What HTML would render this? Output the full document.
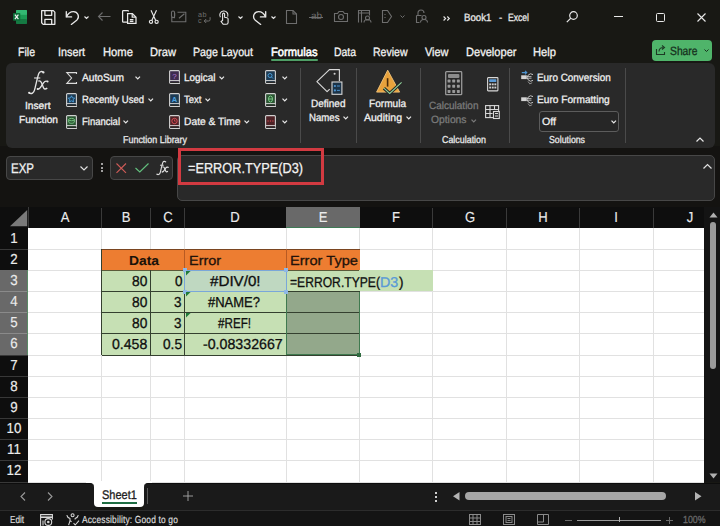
<!DOCTYPE html>
<html><head><meta charset="utf-8">
<style>
*{margin:0;padding:0;box-sizing:border-box}
html,body{width:720px;height:526px;overflow:hidden;background:#181814;font-family:"Liberation Sans",sans-serif;color:#fff;position:relative}
.a{position:absolute}
.t{position:absolute;white-space:nowrap;line-height:1;transform-origin:0 0;text-rendering:geometricPrecision}
svg{position:absolute;overflow:visible}
</style></head><body>

<div class="a" style="left:0;top:0;width:720px;height:63px;background:#181814"></div>
<div class="a" style="left:0;top:146px;width:720px;height:61px;background:#141311"></div>
<div class="a" style="left:6px;top:63px;width:709px;height:85px;background:#292929;border-radius:6px"></div>
<svg style="left:13px;top:10px" width="14" height="14" viewBox="0 0 14 14">
<rect x="3" y="0" width="11" height="13.7" rx="1" fill="#1c9a55"/>
<rect x="3" y="0" width="11" height="4.6" rx="1" fill="#33b873"/>
<rect x="3" y="3.5" width="11" height="1.1" fill="#33b873"/>
<rect x="3" y="9.1" width="11" height="4.6" rx="1" fill="#157a43"/>
<rect x="0" y="3" width="7.3" height="7.7" rx="0.8" fill="#0e6e3a"/>
<path d="M1.9 4.7l3.5 4.4M5.4 4.7L1.9 9.1" stroke="#f4f4f4" stroke-width="1.2"/>
</svg>
<svg style="left:40.5px;top:9.5px" width="14.5" height="15" viewBox="0 0 14.5 15" fill="none" stroke="#e8e8e8" stroke-width="1.3" stroke-linejoin="round">
<path d="M.65 .65h11.7l1.5 1.5v12.2H2.2L.65 12.8z"/><path d="M3.9 .8v4.5h6.8V.8"/><path d="M3.9 14.2V9.4h6.8v4.8"/>
</svg>
<svg style="left:65px;top:9.5px" width="15" height="15" viewBox="0 0 15 15" fill="none" stroke="#e8e8e8" stroke-width="1.3" stroke-linecap="round">
<path d="M1.3 1.6v5.3h5.3"/><path d="M1.6 6.7C3 3.3 5.6 1.6 8.4 1.6a4.9 4.9 0 0 1 3.6 8.3L6.3 14.4"/>
</svg>
<svg style="left:83.5px;top:15.8px" width="5" height="3" viewBox="0 0 5 3" fill="none" stroke="#e8e8e8" stroke-width="1.1"><path d="M0.5 0.5l2 2 2-2"/></svg>
<svg style="left:98px;top:12px" width="13" height="9" viewBox="0 0 13 9" fill="none" stroke="#6e6e6e" stroke-width="1.1"><path d="M0.5 4.5h12M4.5 0.5l-4 4 4 4"/></svg>
<svg style="left:122px;top:10px" width="15" height="14" viewBox="0 0 15 14" fill="none" stroke="#e8e8e8" stroke-width="1.25">
<path d="M6.5 1.6V1.4A.8.8 0 0 0 5.7.6H1.4a.8.8 0 0 0-.8.8v10a.8.8 0 0 0 .8.8H5"/><path d="M5.6 3.6h4.8l3.6 3.6v6.2H5.6z"/><path d="M10.2 3.8v3.4h3.6"/><path d="M7.8 9.7h3.6M7.8 11.4h3.6"/>
</svg>
<svg style="left:148px;top:10px" width="11" height="14" viewBox="0 0 11 14" fill="none" stroke="#e8e8e8" stroke-width="1.15">
<path d="M3 0.3l4.6 10M8.5 0.3l-4.6 10"/><circle cx="3" cy="11.8" r="1.6"/><circle cx="8.6" cy="11.8" r="1.6"/>
</svg>
<svg style="left:170.5px;top:10px" width="16" height="12.5" viewBox="0 0 16 12.5" fill="none" stroke="#6e6e6e" stroke-width="1.1">
<path d="M.8 6.5v5.2h14V2.2H6.5"/><path d="M8 8.2l5.4-4.4"/><path d="M3.5 8.2V2.5a1.5 1.5 0 0 0-3 0v3.5a1.6 1.6 0 0 0 3.2 0V3"/>
</svg>
<svg style="left:197.5px;top:10px" width="13" height="14" viewBox="0 0 13 14">
<text x="0" y="6.6" font-size="7.2" font-family="Liberation Sans" fill="#6e6e6e" letter-spacing="0.6">ab</text>
<text x="0" y="12.6" font-size="7.2" font-family="Liberation Sans" fill="#6e6e6e">c</text>
<path d="M12.1 7.2v2.4a1.4 1.4 0 0 1-1.4 1.4H6.2M8.2 9l-2 2 2 2" fill="none" stroke="#6e6e6e" stroke-width="1"/>
</svg>
<svg style="left:219px;top:9.5px" width="11" height="15" viewBox="0 0 11 15" fill="none" stroke="#e8e8e8" stroke-width="1.1" stroke-linejoin="round">
<path d="M1.4 7.3A4.1 4.1 0 1 1 8.7 6.6"/><path d="M3.6 10.6V4.1a1 1 0 0 1 2 0V7.2l2.4.5a1.4 1.4 0 0 1 1.1 1.4v3.4a1.8 1.8 0 0 1-1.8 1.8H4.3L2 11.5z"/>
</svg>
<svg style="left:237.5px;top:15.8px" width="5" height="3" viewBox="0 0 5 3" fill="none" stroke="#e8e8e8" stroke-width="1.1"><path d="M0.5 0.5l2 2 2-2"/></svg>
<svg style="left:252px;top:9.5px" width="15" height="15" viewBox="0 0 15 15" fill="none" stroke="#e8e8e8" stroke-width="1.3" stroke-linecap="round">
<path d="M13.7 1.6v5.3H8.4"/><path d="M13.4 6.7C12 3.3 9.4 1.6 6.6 1.6a4.9 4.9 0 0 0-3.6 8.3L8.7 14.4"/>
</svg>
<svg style="left:271px;top:15.8px" width="5" height="3" viewBox="0 0 5 3" fill="none" stroke="#e8e8e8" stroke-width="1.1"><path d="M0.5 0.5l2 2 2-2"/></svg>
<svg style="left:286px;top:10px" width="11" height="14" viewBox="0 0 11 14" fill="none" stroke="#6e6e6e" stroke-width="1.1"><path d="M0.5 0.5h6.5l3.5 3.5v9.5H0.5z"/><path d="M7 0.5v3.5h3.5"/></svg>
<div class="t" style="left:311px;top:12px;font-size:10px;color:#6e6e6e">ab</div>
<div class="a" style="left:309px;top:17px;width:14px;height:1px;background:#6e6e6e"></div>
<svg style="left:334px;top:11px" width="14" height="11" viewBox="0 0 14 11" fill="none" stroke="#6e6e6e" stroke-width="1.1"><path d="M0.5 2.5h3l1.5-2h4l1.5 2h3v8h-13z"/><circle cx="7" cy="6" r="2.5"/></svg>
<svg style="left:358px;top:10px" width="14" height="13" viewBox="0 0 14 13" fill="none" stroke="#6e6e6e" stroke-width="1.1"><path d="M0.5 12.5V.5h11v5"/><path d="M.5 3h11M3.5 .5v12"/><circle cx="9.5" cy="8" r="2"/><path d="M6 12.5a3.5 3 0 0 1 7 0"/></svg>
<svg style="left:382px;top:10px" width="10" height="13" viewBox="0 0 10 13" fill="none" stroke="#6e6e6e" stroke-width="1.1"><path d="M.5 .5h5l4 6-4 6h-5z"/><path d="M3 4v1M3 7v1"/></svg>
<svg style="left:400px;top:15px" width="5" height="3" viewBox="0 0 5 3" fill="none" stroke="#6e6e6e" stroke-width="1"><path d="M0.5 0.5l2 2 2-2"/></svg>
<svg style="left:416px;top:10px" width="12" height="13" viewBox="0 0 12 13" fill="none" stroke="#6e6e6e" stroke-width="1.1"><path d="M2 5V3a3 3 0 0 1 6 0"/><path d="M.5 5.5h5M.5 5.5v7h3"/><circle cx="8" cy="7.5" r="2"/><path d="M4.5 12.5a3.5 3 0 0 1 7 0"/></svg>
<svg style="left:442.5px;top:15.5px" width="7" height="5" viewBox="0 0 7 5" fill="none" stroke="#e8e8e8" stroke-width="1.1"><path d="M.6 .5l2 2-2 2M4.3 .5l2 2-2 2"/></svg>
<svg style="left:566px;top:11px" width="12" height="12" viewBox="0 0 12 12" fill="none" stroke="#e8e8e8" stroke-width="1.2"><circle cx="7.5" cy="4.5" r="3.8"/><path d="M4.8 7.2L.8 11.2"/></svg>
<div class="a" style="left:614px;top:16px;width:9px;height:1px;background:#e8e8e8"></div>
<div class="a" style="left:656px;top:13px;width:9px;height:9px;border:1.2px solid #e8e8e8;border-radius:1.5px"></div>
<svg style="left:697px;top:13px" width="9" height="9" viewBox="0 0 9 9" fill="none" stroke="#e8e8e8" stroke-width="1.1"><path d="M.5 .5l8 8M8.5 .5l-8 8"/></svg>
<div class="a" style="left:271px;top:58.5px;width:47px;height:2px;background:#4e9e66;border-radius:1px"></div>
<div class="a" style="left:652px;top:40px;width:60px;height:21px;background:#4fb46a;border-radius:4px"></div>
<svg style="left:656px;top:45px" width="10" height="10" viewBox="0 0 10 10" fill="none" stroke="#1d3a24" stroke-width="1.1"><path d="M.5 4v5.5h8V7"/><path d="M3 6.5C3 3.5 5 2.5 7.5 2.5M6 .5l2.5 2-2.5 2"/></svg>
<svg style="left:704px;top:49px" width="5" height="3" viewBox="0 0 5 3" fill="none" stroke="#16301d" stroke-width="1"><path d="M0.5 0.5l2 2 2-2"/></svg>
<svg style="left:27.5px;top:71.3px" width="20.7" height="23.2" viewBox="7.5 6.3 20.7 23.2"><path d="M22.7 7.6C21.5 6.3 19.2 6.6 18.2 9C17.2 11.5 15 22 14 25.5C13.2 28.2 11.2 29.5 8.6 28.4" stroke="#e4e4e4" stroke-width="1.35" fill="none"/><circle cx="22.9" cy="7.7" r="1.15" fill="#e4e4e4"/><circle cx="8.7" cy="28.1" r="1.15" fill="#e4e4e4"/><path d="M13.6 13.3H19.8" stroke="#e4e4e4" stroke-width="1.1"/><path d="M17.8 16.4C19.6 15.7 20.5 16.6 21.2 18.6L23 23C23.6 24.5 24.8 24.8 26.8 23.4" stroke="#e4e4e4" stroke-width="1.35" fill="none"/><path d="M27 16.8C25.5 15.9 24.3 16.4 23 18.1L20 22.6C19 24.1 18 24.6 17 24.1" stroke="#e4e4e4" stroke-width="1.35" fill="none"/><circle cx="27.1" cy="16.9" r="1" fill="#e4e4e4"/><circle cx="17.2" cy="24.2" r="1" fill="#e4e4e4"/></svg>
<svg style="left:66px;top:72px" width="11" height="12" viewBox="0 0 11 12" fill="none" stroke="#dcdcdc" stroke-width="1.1"><path d="M10.5 2V.6H.8l4.8 5.4L.8 11.4h9.7V10"/></svg>
<svg style="left:135.25px;top:75.75px" width="5.5" height="3.5" viewBox="0 0 5.5 3.5" fill="none" stroke="#e8e8e8" stroke-width="1.25"><path d="M0.5 0.6l2.25 2.25 2.25-2.25"/></svg>
<svg style="left:66px;top:92.5px" width="11" height="14" viewBox="0 0 11 14">
<path d="M1.5.6h8a.9.9 0 0 1 .9.9v11.9H1.5a.9.9 0 0 1-.9-.9V1.5a.9.9 0 0 1 .9-.9z" fill="#1d3a52" stroke="#d0d0d0" stroke-width="1.1"/>
<path d="M.6 10.6h9.8" stroke="#d0d0d0" stroke-width="1"/>
<path d="M1.2 11.6h9.2v1.4H1.2z" fill="#2a2a2a"/>
<path d="M5.5 2.8l1 2.1 2.2.3-1.6 1.5.4 2.2-2-1.1-2 1.1.4-2.2-1.6-1.5 2.2-.3z" fill="none" stroke="#4da3e0" stroke-width="0.9"/>
</svg>
<svg style="left:148.25px;top:98.25px" width="5.5" height="3.5" viewBox="0 0 5.5 3.5" fill="none" stroke="#e8e8e8" stroke-width="1.25"><path d="M0.5 0.6l2.25 2.25 2.25-2.25"/></svg>
<svg style="left:66px;top:114.5px" width="11" height="14" viewBox="0 0 11 14">
<path d="M1.5.6h8a.9.9 0 0 1 .9.9v11.9H1.5a.9.9 0 0 1-.9-.9V1.5a.9.9 0 0 1 .9-.9z" fill="#2b5533" stroke="#d0d0d0" stroke-width="1.1"/>
<path d="M.6 10.6h9.8" stroke="#d0d0d0" stroke-width="1"/>
<path d="M1.2 11.6h9.2v1.4H1.2z" fill="#2a2a2a"/>
<ellipse cx="5.5" cy="4.6" rx="2.8" ry="1.2" fill="none" stroke="#7fd08a" stroke-width="0.9"/><path d="M2.7 4.6v2.4c0 .7 1.3 1.3 2.8 1.3s2.8-.6 2.8-1.3V4.6" fill="none" stroke="#7fd08a" stroke-width="0.9"/>
</svg>
<svg style="left:123.25px;top:120.25px" width="5.5" height="3.5" viewBox="0 0 5.5 3.5" fill="none" stroke="#e8e8e8" stroke-width="1.25"><path d="M0.5 0.6l2.25 2.25 2.25-2.25"/></svg>
<svg style="left:168.5px;top:70px" width="11" height="14" viewBox="0 0 11 14">
<path d="M1.5.6h8a.9.9 0 0 1 .9.9v11.9H1.5a.9.9 0 0 1-.9-.9V1.5a.9.9 0 0 1 .9-.9z" fill="#3e2c4e" stroke="#d0d0d0" stroke-width="1.1"/>
<path d="M.6 10.6h9.8" stroke="#d0d0d0" stroke-width="1"/>
<path d="M1.2 11.6h9.2v1.4H1.2z" fill="#2a2a2a"/>
<text x="5.5" y="8.6" font-size="8" font-family="Liberation Sans" fill="#b57ad6" text-anchor="middle">?</text>
</svg>
<svg style="left:219.25px;top:75.75px" width="5.5" height="3.5" viewBox="0 0 5.5 3.5" fill="none" stroke="#e8e8e8" stroke-width="1.25"><path d="M0.5 0.6l2.25 2.25 2.25-2.25"/></svg>
<svg style="left:168.5px;top:92.5px" width="11" height="14" viewBox="0 0 11 14">
<path d="M1.5.6h8a.9.9 0 0 1 .9.9v11.9H1.5a.9.9 0 0 1-.9-.9V1.5a.9.9 0 0 1 .9-.9z" fill="#1d3a52" stroke="#d0d0d0" stroke-width="1.1"/>
<path d="M.6 10.6h9.8" stroke="#d0d0d0" stroke-width="1"/>
<path d="M1.2 11.6h9.2v1.4H1.2z" fill="#2a2a2a"/>
<text x="5.5" y="8.8" font-size="7.5" font-weight="bold" font-family="Liberation Sans" fill="#4da3e0" text-anchor="middle">A</text>
</svg>
<svg style="left:204.75px;top:98.25px" width="5.5" height="3.5" viewBox="0 0 5.5 3.5" fill="none" stroke="#e8e8e8" stroke-width="1.25"><path d="M0.5 0.6l2.25 2.25 2.25-2.25"/></svg>
<svg style="left:168.5px;top:114.5px" width="11" height="14" viewBox="0 0 11 14">
<path d="M1.5.6h8a.9.9 0 0 1 .9.9v11.9H1.5a.9.9 0 0 1-.9-.9V1.5a.9.9 0 0 1 .9-.9z" fill="#4e2226" stroke="#d0d0d0" stroke-width="1.1"/>
<path d="M.6 10.6h9.8" stroke="#d0d0d0" stroke-width="1"/>
<path d="M1.2 11.6h9.2v1.4H1.2z" fill="#2a2a2a"/>
<circle cx="5.5" cy="6" r="2.7" fill="none" stroke="#e0525a" stroke-width="0.9"/><path d="M5.5 4.5v1.6h1.2" fill="none" stroke="#e0525a" stroke-width="0.8"/>
</svg>
<svg style="left:244.25px;top:120.25px" width="5.5" height="3.5" viewBox="0 0 5.5 3.5" fill="none" stroke="#e8e8e8" stroke-width="1.25"><path d="M0.5 0.6l2.25 2.25 2.25-2.25"/></svg>
<svg style="left:265px;top:70px" width="11" height="14" viewBox="0 0 11 14">
<path d="M1.5.6h8a.9.9 0 0 1 .9.9v11.9H1.5a.9.9 0 0 1-.9-.9V1.5a.9.9 0 0 1 .9-.9z" fill="#1d3a52" stroke="#d0d0d0" stroke-width="1.1"/>
<path d="M.6 10.6h9.8" stroke="#d0d0d0" stroke-width="1"/>
<path d="M1.2 11.6h9.2v1.4H1.2z" fill="#2a2a2a"/>
<circle cx="5" cy="5.5" r="2" fill="none" stroke="#4da3e0" stroke-width="0.9"/><path d="M6.5 7l1.5 1.5" stroke="#4da3e0" stroke-width="0.9"/>
</svg>
<svg style="left:281.75px;top:75.75px" width="5.5" height="3.5" viewBox="0 0 5.5 3.5" fill="none" stroke="#e8e8e8" stroke-width="1.25"><path d="M0.5 0.6l2.25 2.25 2.25-2.25"/></svg>
<svg style="left:265px;top:92.5px" width="11" height="14" viewBox="0 0 11 14">
<path d="M1.5.6h8a.9.9 0 0 1 .9.9v11.9H1.5a.9.9 0 0 1-.9-.9V1.5a.9.9 0 0 1 .9-.9z" fill="#2b5533" stroke="#d0d0d0" stroke-width="1.1"/>
<path d="M.6 10.6h9.8" stroke="#d0d0d0" stroke-width="1"/>
<path d="M1.2 11.6h9.2v1.4H1.2z" fill="#2a2a2a"/>
<ellipse cx="5.5" cy="6" rx="2" ry="3" fill="none" stroke="#7fd08a" stroke-width="0.9"/><path d="M3.5 6h4" stroke="#7fd08a" stroke-width="0.9"/>
</svg>
<svg style="left:281.75px;top:98.25px" width="5.5" height="3.5" viewBox="0 0 5.5 3.5" fill="none" stroke="#e8e8e8" stroke-width="1.25"><path d="M0.5 0.6l2.25 2.25 2.25-2.25"/></svg>
<svg style="left:265px;top:114.5px" width="11" height="14" viewBox="0 0 11 14">
<path d="M1.5.6h8a.9.9 0 0 1 .9.9v11.9H1.5a.9.9 0 0 1-.9-.9V1.5a.9.9 0 0 1 .9-.9z" fill="#4e2226" stroke="#d0d0d0" stroke-width="1.1"/>
<path d="M.6 10.6h9.8" stroke="#d0d0d0" stroke-width="1"/>
<path d="M1.2 11.6h9.2v1.4H1.2z" fill="#2a2a2a"/>
<path d="M2.5 6h1.2M4.9 6h1.2M7.3 6h1.2" stroke="#e0525a" stroke-width="1"/>
</svg>
<svg style="left:281.75px;top:120.25px" width="5.5" height="3.5" viewBox="0 0 5.5 3.5" fill="none" stroke="#e8e8e8" stroke-width="1.25"><path d="M0.5 0.6l2.25 2.25 2.25-2.25"/></svg>
<div class="a" style="left:300px;top:68px;width:1px;height:75px;background:#4a4a4a"></div>
<svg style="left:316px;top:69px" width="27" height="26" viewBox="0 0 27 26" fill="none">
<path d="M23.4 12V.6H13.4L.9 12.7l10.2 10 2.6-2.6" stroke="#d8d8d8" stroke-width="1.15" stroke-linejoin="round"/>
<circle cx="18.6" cy="4.8" r="1.05" fill="#cfcfcf"/>
<rect x="16" y="13" width="9.9" height="12.3" fill="#1b3348" stroke="#d8d8d8" stroke-width="1.1"/>
<circle cx="18.9" cy="17" r="1.1" fill="#4d93cf"/><path d="M20.9 17h3" stroke="#4d93cf" stroke-width="1"/>
<circle cx="18.9" cy="21.4" r="1.1" fill="#4d93cf"/><path d="M20.9 21.4h3" stroke="#4d93cf" stroke-width="1"/>
</svg>
<svg style="left:342.75px;top:116.25px" width="5.5" height="3.5" viewBox="0 0 5.5 3.5" fill="none" stroke="#e8e8e8" stroke-width="1.25"><path d="M0.5 0.6l2.25 2.25 2.25-2.25"/></svg>
<div class="a" style="left:356px;top:68px;width:1px;height:75px;background:#4a4a4a"></div>
<svg style="left:376px;top:69px" width="27" height="26" viewBox="0 0 27 26">
<path d="M11.7 1.2L23.6 23.1H.6z" fill="#e8a23c" stroke="#f2c47a" stroke-width="0.9" stroke-linejoin="round"/>
<path d="M11.6 9.2V17.6" stroke="#4a2a08" stroke-width="1.6"/>
<path d="M7.9 19.2L13.7 24.4 25.6 13.4" fill="none" stroke="#262626" stroke-width="3.2"/>
<path d="M7.9 19.2L13.7 24.4 25.6 13.4" fill="none" stroke="#8fd09a" stroke-width="1.1"/>
</svg>
<svg style="left:405.75px;top:116.25px" width="5.5" height="3.5" viewBox="0 0 5.5 3.5" fill="none" stroke="#e8e8e8" stroke-width="1.25"><path d="M0.5 0.6l2.25 2.25 2.25-2.25"/></svg>
<div class="a" style="left:419.5px;top:68px;width:1px;height:75px;background:#4a4a4a"></div>
<svg style="left:444.5px;top:70.5px" width="17.5" height="24.5" viewBox="0 0 17.5 24.5" fill="none">
<rect x="0.7" y="0.7" width="16" height="23" rx="0.8" stroke="#9a9a9a" stroke-width="1.3"/>
<rect x="3" y="2.9" width="11.4" height="4.2" rx="1" fill="#8c8c8c"/>
<g fill="#9a9a9a"><rect x="2.6" y="8.6" width="2.9" height="2.9" rx=".6"/><rect x="7.25" y="8.6" width="2.9" height="2.9" rx=".6"/><rect x="11.9" y="8.6" width="2.9" height="2.9" rx=".6"/>
<rect x="2.6" y="13.8" width="2.9" height="2.9" rx=".6"/><rect x="7.25" y="13.8" width="2.9" height="2.9" rx=".6"/><rect x="11.9" y="13.8" width="2.9" height="2.9" rx=".6"/>
<rect x="2.6" y="19" width="2.9" height="2.9" rx=".6"/><rect x="7.25" y="19" width="2.9" height="2.9" rx=".6"/><rect x="11.9" y="19" width="2.9" height="2.9" rx=".6"/></g>
</svg>
<svg style="left:470.75px;top:118.75px" width="5.5" height="3.5" viewBox="0 0 5.5 3.5" fill="none" stroke="#7a7a7a" stroke-width="1.25"><path d="M0.5 0.6l2.25 2.25 2.25-2.25"/></svg>
<svg style="left:486.8px;top:76.6px" width="11.5" height="14.5" viewBox="0 0 11.5 14.5" fill="none">
<rect x="0.6" y="0.6" width="10.3" height="13.3" rx="0.6" stroke="#d8d8d8" stroke-width="1.1"/>
<rect x="2.2" y="2.2" width="7.1" height="2.8" rx=".5" fill="#5a9ad6"/>
<g fill="#d0d0d0"><rect x="2.2" y="6.4" width="1.9" height="1.9"/><rect x="4.8" y="6.4" width="1.9" height="1.9"/><rect x="7.4" y="6.4" width="1.9" height="1.9"/>
<rect x="2.2" y="9.6" width="1.9" height="1.9"/><rect x="4.8" y="9.6" width="1.9" height="1.9"/><rect x="7.4" y="9.6" width="1.9" height="1.9"/></g>
</svg>
<svg style="left:485px;top:105px" width="15" height="14" viewBox="0 0 15 14" fill="none" stroke="#d8d8d8" stroke-width="1.1">
<rect x="0.6" y="0.6" width="13" height="12" />
<path d="M0.6 4.5h13M0.6 8.5h7M5 0.6v12M9.5 .6v4"/>
<rect x="8.5" y="6.5" width="5.8" height="7" fill="#2a2a2a"/>
<path d="M10 8.5h3M10 11h3" />
</svg>
<div class="a" style="left:509px;top:68px;width:1px;height:75px;background:#4a4a4a"></div>
<svg style="left:520.5px;top:69.5px" width="13" height="15" viewBox="0 0 13 15" fill="none">
<rect x="0.2" y="5.3" width="5.6" height="3.8" fill="#d4d4d4"/>
<path d="M12 4.6A3.6 3.6 0 1 0 12 10.4" stroke="#c4c4c4" stroke-width="1"/>
<path d="M6 6.6h4.5M6 8.2h4.5" stroke="#c4c4c4" stroke-width="0.9"/>
<path d="M7 11.5l1.8 2.4 2.4-1.2" stroke="#9a9a9a" stroke-width="0.9"/>
<path d="M.8 2.6h5M4 .8l1.8 1.8L4 4.4" stroke="#4d93cf" stroke-width="1.1"/>
</svg>
<svg style="left:520.5px;top:92px" width="13" height="15" viewBox="0 0 13 15" fill="none">
<rect x="0.2" y="5.3" width="5.6" height="3.8" fill="#d4d4d4"/>
<path d="M12 4.6A3.6 3.6 0 1 0 12 10.4" stroke="#c4c4c4" stroke-width="1"/>
<path d="M6 6.6h4.5M6 8.2h4.5" stroke="#c4c4c4" stroke-width="0.9"/>
<path d="M7 11.5l1.8 2.4 2.4-1.2" stroke="#9a9a9a" stroke-width="0.9"/>

</svg>
<div class="a" style="left:539px;top:111px;width:80px;height:20.5px;border:1px solid #5c5c5c;border-radius:3px;background:#262626"></div>
<svg style="left:611.25px;top:119.75px" width="5.5" height="3.5" viewBox="0 0 5.5 3.5" fill="none" stroke="#e8e8e8" stroke-width="1.25"><path d="M0.5 0.6l2.25 2.25 2.25-2.25"/></svg>
<div class="a" style="left:625px;top:68px;width:1px;height:75px;background:#4a4a4a"></div>
<svg style="left:696px;top:137px" width="8" height="5" viewBox="0 0 8 5" fill="none" stroke="#e8e8e8" stroke-width="1.2"><path d="M.5 4.5l3.5-3.5 3.5 3.5"/></svg>
<div class="a" style="left:6px;top:155.5px;width:87px;height:24px;background:#292929;border:1px solid #474747;border-radius:4px"></div>
<svg style="left:80px;top:166px" width="8" height="5" viewBox="0 0 8 5" fill="none" stroke="#e0e0e0" stroke-width="1.2"><path d="M.5 .5l3.5 3.5 3.5-3.5"/></svg>
<div class="a" style="left:100.5px;top:163px;width:2px;height:2px;background:#cfcfcf;border-radius:1px"></div>
<div class="a" style="left:100.5px;top:166.5px;width:2px;height:2px;background:#cfcfcf;border-radius:1px"></div>
<div class="a" style="left:100.5px;top:170px;width:2px;height:2px;background:#cfcfcf;border-radius:1px"></div>
<div class="a" style="left:110px;top:155.5px;width:63px;height:24px;background:#292929;border:1px solid #474747;border-radius:4px"></div>
<svg style="left:116px;top:162.7px" width="10.5" height="10.3" viewBox="0 0 10.5 10.3" fill="none" stroke="#cf5b57" stroke-width="1.1"><path d="M.5 .5l9.5 9.3M10 .5l-9.5 9.3"/></svg>
<svg style="left:134.8px;top:162.7px" width="14" height="9.5" viewBox="0 0 14 9.5" fill="none" stroke="#63c07e" stroke-width="1.15"><path d="M.5 5l4.3 4L13.5.5"/></svg>
<svg style="left:156px;top:160.9px" width="13.1" height="14" viewBox="7.5 6.3 20.7 23.2"><path d="M22.7 7.6C21.5 6.3 19.2 6.6 18.2 9C17.2 11.5 15 22 14 25.5C13.2 28.2 11.2 29.5 8.6 28.4" stroke="#dedede" stroke-width="1.9" fill="none"/><circle cx="22.9" cy="7.7" r="1.15" fill="#dedede"/><circle cx="8.7" cy="28.1" r="1.15" fill="#dedede"/><path d="M13.6 13.3H19.8" stroke="#dedede" stroke-width="1.5"/><path d="M17.8 16.4C19.6 15.7 20.5 16.6 21.2 18.6L23 23C23.6 24.5 24.8 24.8 26.8 23.4" stroke="#dedede" stroke-width="1.9" fill="none"/><path d="M27 16.8C25.5 15.9 24.3 16.4 23 18.1L20 22.6C19 24.1 18 24.6 17 24.1" stroke="#dedede" stroke-width="1.9" fill="none"/><circle cx="27.1" cy="16.9" r="1" fill="#dedede"/><circle cx="17.2" cy="24.2" r="1" fill="#dedede"/></svg>
<div class="a" style="left:177px;top:155px;width:538px;height:46px;background:#292929;border:1px solid #474747;border-radius:5px"></div>
<div class="a" style="left:178px;top:148px;width:146px;height:37px;border:3px solid #d23a41"></div>
<svg style="left:703px;top:164px" width="9" height="5" viewBox="0 0 9 5" fill="none" stroke="#e0e0e0" stroke-width="1.2"><path d="M.5 4.5l4-4 4 4"/></svg>
<div class="a" style="left:0;top:207px;width:720px;height:275px;background:#0e0e0e"></div>
<div class="a" style="left:28px;top:228px;width:676px;height:254px;background:#ffffff"></div>
<div class="a" style="left:28px;top:248.67px;width:676px;height:1px;background:#e1e1e1"></div>
<div class="a" style="left:28px;top:269.83px;width:676px;height:1px;background:#e1e1e1"></div>
<div class="a" style="left:28px;top:291.00px;width:676px;height:1px;background:#e1e1e1"></div>
<div class="a" style="left:28px;top:312.17px;width:676px;height:1px;background:#e1e1e1"></div>
<div class="a" style="left:28px;top:333.33px;width:676px;height:1px;background:#e1e1e1"></div>
<div class="a" style="left:28px;top:354.50px;width:676px;height:1px;background:#e1e1e1"></div>
<div class="a" style="left:28px;top:375.67px;width:676px;height:1px;background:#e1e1e1"></div>
<div class="a" style="left:28px;top:396.83px;width:676px;height:1px;background:#e1e1e1"></div>
<div class="a" style="left:28px;top:418.00px;width:676px;height:1px;background:#e1e1e1"></div>
<div class="a" style="left:28px;top:439.17px;width:676px;height:1px;background:#e1e1e1"></div>
<div class="a" style="left:28px;top:460.33px;width:676px;height:1px;background:#e1e1e1"></div>
<div class="a" style="left:28px;top:481.50px;width:676px;height:1px;background:#e1e1e1"></div>
<div class="a" style="left:101.00px;top:228px;width:1px;height:254px;background:#e1e1e1"></div>
<div class="a" style="left:150.20px;top:228px;width:1px;height:254px;background:#e1e1e1"></div>
<div class="a" style="left:184.20px;top:228px;width:1px;height:254px;background:#e1e1e1"></div>
<div class="a" style="left:285.60px;top:228px;width:1px;height:254px;background:#e1e1e1"></div>
<div class="a" style="left:359.00px;top:228px;width:1px;height:254px;background:#e1e1e1"></div>
<div class="a" style="left:432.40px;top:228px;width:1px;height:254px;background:#e1e1e1"></div>
<div class="a" style="left:505.80px;top:228px;width:1px;height:254px;background:#e1e1e1"></div>
<div class="a" style="left:579.20px;top:228px;width:1px;height:254px;background:#e1e1e1"></div>
<div class="a" style="left:652.60px;top:228px;width:1px;height:254px;background:#e1e1e1"></div>
<div class="a" style="left:101.00px;top:208px;width:1px;height:20px;background:#3a3a3a"></div>
<div class="a" style="left:150.20px;top:208px;width:1px;height:20px;background:#3a3a3a"></div>
<div class="a" style="left:184.20px;top:208px;width:1px;height:20px;background:#3a3a3a"></div>
<div class="a" style="left:285.60px;top:208px;width:1px;height:20px;background:#3a3a3a"></div>
<div class="a" style="left:359.00px;top:208px;width:1px;height:20px;background:#3a3a3a"></div>
<div class="a" style="left:432.40px;top:208px;width:1px;height:20px;background:#3a3a3a"></div>
<div class="a" style="left:505.80px;top:208px;width:1px;height:20px;background:#3a3a3a"></div>
<div class="a" style="left:579.20px;top:208px;width:1px;height:20px;background:#3a3a3a"></div>
<div class="a" style="left:652.60px;top:208px;width:1px;height:20px;background:#3a3a3a"></div>
<div class="a" style="left:286.1px;top:207px;width:73.9px;height:21px;background:#696969"></div>
<div class="a" style="left:286.1px;top:226.5px;width:73.9px;height:1.2px;background:#3f7a55"></div>
<div class="t" style="left:64.75px;top:210.6px;width:40px;margin-left:-20px;text-align:center;font-size:14.5px;color:#ececec;transform:scaleX(0.9);transform-origin:50% 0;-webkit-text-stroke:0.15px #ececec">A</div>
<div class="t" style="left:126.10px;top:210.6px;width:40px;margin-left:-20px;text-align:center;font-size:14.5px;color:#ececec;transform:scaleX(0.9);transform-origin:50% 0;-webkit-text-stroke:0.15px #ececec">B</div>
<div class="t" style="left:167.70px;top:210.6px;width:40px;margin-left:-20px;text-align:center;font-size:14.5px;color:#ececec;transform:scaleX(0.9);transform-origin:50% 0;-webkit-text-stroke:0.15px #ececec">C</div>
<div class="t" style="left:235.40px;top:210.6px;width:40px;margin-left:-20px;text-align:center;font-size:14.5px;color:#ececec;transform:scaleX(0.9);transform-origin:50% 0;-webkit-text-stroke:0.15px #ececec">D</div>
<div class="t" style="left:322.80px;top:210.6px;width:40px;margin-left:-20px;text-align:center;font-size:14.5px;color:#ececec;transform:scaleX(0.9);transform-origin:50% 0;-webkit-text-stroke:0.15px #ececec">E</div>
<div class="t" style="left:396.20px;top:210.6px;width:40px;margin-left:-20px;text-align:center;font-size:14.5px;color:#ececec;transform:scaleX(0.9);transform-origin:50% 0;-webkit-text-stroke:0.15px #ececec">F</div>
<div class="t" style="left:469.60px;top:210.6px;width:40px;margin-left:-20px;text-align:center;font-size:14.5px;color:#ececec;transform:scaleX(0.9);transform-origin:50% 0;-webkit-text-stroke:0.15px #ececec">G</div>
<div class="t" style="left:543.00px;top:210.6px;width:40px;margin-left:-20px;text-align:center;font-size:14.5px;color:#ececec;transform:scaleX(0.9);transform-origin:50% 0;-webkit-text-stroke:0.15px #ececec">H</div>
<div class="t" style="left:616.40px;top:210.6px;width:40px;margin-left:-20px;text-align:center;font-size:14.5px;color:#ececec;transform:scaleX(0.9);transform-origin:50% 0;-webkit-text-stroke:0.15px #ececec">I</div>
<div class="t" style="left:689.80px;top:210.6px;width:40px;margin-left:-20px;text-align:center;font-size:14.5px;color:#ececec;transform:scaleX(0.9);transform-origin:50% 0;-webkit-text-stroke:0.15px #ececec">J</div>
<svg style="left:9.5px;top:209.8px" width="17.5" height="16.2" viewBox="0 0 17.5 16.2"><path d="M17.2 0V16.2H0z" fill="#7a7a7a"/></svg>
<div class="a" style="left:27.5px;top:207px;width:1px;height:21px;background:#3a3a3a"></div>
<div class="a" style="left:0;top:248.67px;width:27.5px;height:1px;background:#383838"></div>
<div class="t" style="left:0;top:231.50px;width:28px;text-align:center;font-size:14.5px;color:#ececec;transform:scaleX(0.92);transform-origin:50% 0;-webkit-text-stroke:0.15px #ececec">1</div>
<div class="a" style="left:0;top:269.83px;width:27.5px;height:1px;background:#383838"></div>
<div class="t" style="left:0;top:252.67px;width:28px;text-align:center;font-size:14.5px;color:#ececec;transform:scaleX(0.92);transform-origin:50% 0;-webkit-text-stroke:0.15px #ececec">2</div>
<div class="a" style="left:0;top:270.33px;width:28px;height:21.17px;background:#696969"></div>
<div class="a" style="left:0;top:291.00px;width:27.5px;height:1px;background:#8a8a8a"></div>
<div class="t" style="left:0;top:273.83px;width:28px;text-align:center;font-size:14.5px;color:#ececec;transform:scaleX(0.92);transform-origin:50% 0;-webkit-text-stroke:0.15px #ececec">3</div>
<div class="a" style="left:0;top:291.50px;width:28px;height:21.17px;background:#696969"></div>
<div class="a" style="left:0;top:312.17px;width:27.5px;height:1px;background:#8a8a8a"></div>
<div class="t" style="left:0;top:295.00px;width:28px;text-align:center;font-size:14.5px;color:#ececec;transform:scaleX(0.92);transform-origin:50% 0;-webkit-text-stroke:0.15px #ececec">4</div>
<div class="a" style="left:0;top:312.67px;width:28px;height:21.17px;background:#696969"></div>
<div class="a" style="left:0;top:333.33px;width:27.5px;height:1px;background:#8a8a8a"></div>
<div class="t" style="left:0;top:316.17px;width:28px;text-align:center;font-size:14.5px;color:#ececec;transform:scaleX(0.92);transform-origin:50% 0;-webkit-text-stroke:0.15px #ececec">5</div>
<div class="a" style="left:0;top:333.83px;width:28px;height:21.17px;background:#696969"></div>
<div class="a" style="left:0;top:354.50px;width:27.5px;height:1px;background:#383838"></div>
<div class="t" style="left:0;top:337.33px;width:28px;text-align:center;font-size:14.5px;color:#ececec;transform:scaleX(0.92);transform-origin:50% 0;-webkit-text-stroke:0.15px #ececec">6</div>
<div class="a" style="left:0;top:375.67px;width:27.5px;height:1px;background:#383838"></div>
<div class="t" style="left:0;top:358.50px;width:28px;text-align:center;font-size:14.5px;color:#ececec;transform:scaleX(0.92);transform-origin:50% 0;-webkit-text-stroke:0.15px #ececec">7</div>
<div class="a" style="left:0;top:396.83px;width:27.5px;height:1px;background:#383838"></div>
<div class="t" style="left:0;top:379.67px;width:28px;text-align:center;font-size:14.5px;color:#ececec;transform:scaleX(0.92);transform-origin:50% 0;-webkit-text-stroke:0.15px #ececec">8</div>
<div class="a" style="left:0;top:418.00px;width:27.5px;height:1px;background:#383838"></div>
<div class="t" style="left:0;top:400.83px;width:28px;text-align:center;font-size:14.5px;color:#ececec;transform:scaleX(0.92);transform-origin:50% 0;-webkit-text-stroke:0.15px #ececec">9</div>
<div class="a" style="left:0;top:439.17px;width:27.5px;height:1px;background:#383838"></div>
<div class="t" style="left:0;top:422.00px;width:28px;text-align:center;font-size:14.5px;color:#ececec;transform:scaleX(0.92);transform-origin:50% 0;-webkit-text-stroke:0.15px #ececec">10</div>
<div class="a" style="left:0;top:460.33px;width:27.5px;height:1px;background:#383838"></div>
<div class="t" style="left:0;top:443.17px;width:28px;text-align:center;font-size:14.5px;color:#ececec;transform:scaleX(0.92);transform-origin:50% 0;-webkit-text-stroke:0.15px #ececec">11</div>
<div class="a" style="left:0;top:481.50px;width:27.5px;height:1px;background:#383838"></div>
<div class="t" style="left:0;top:464.33px;width:28px;text-align:center;font-size:14.5px;color:#ececec;transform:scaleX(0.92);transform-origin:50% 0;-webkit-text-stroke:0.15px #ececec">12</div>
<div class="a" style="left:27px;top:270.33px;width:1.2px;height:84.67px;background:#5a8a66"></div>
<div class="a" style="left:704px;top:207px;width:16px;height:275px;background:#141414"></div>
<svg style="left:708.5px;top:211.5px" width="9" height="6" viewBox="0 0 9 6"><path d="M4.5 0.5L8.5 5.5H.5z" fill="#b0b0b0"/></svg>
<svg style="left:708.5px;top:473px" width="9" height="6" viewBox="0 0 9 6"><path d="M4.5 5.5L8.5 .5H.5z" fill="#b0b0b0"/></svg>
<div class="a" style="left:710.2px;top:222px;width:6.3px;height:147px;background:#9a9a9a;border-radius:3.2px"></div>
<div class="a" style="left:86px;top:481px;width:66px;height:6px;background:#ffffff"></div>
<div class="a" style="left:0;top:482.5px;width:94.2px;height:28px;background:#1a1a1a;border-radius:0 4px 0 0;border-top:1px solid #0d0d0d"></div>
<div class="a" style="left:144.3px;top:482.5px;width:576px;height:28px;background:#1a1a1a;border-radius:4px 0 0 0;border-top:1px solid #0d0d0d"></div>
<div class="a" style="left:0;top:510px;width:720px;height:16px;background:#141414"></div>
<div class="a" style="left:0;top:509.5px;width:720px;height:1.2px;background:#2c2c2c"></div>
<svg style="left:20px;top:492px" width="6" height="9" viewBox="0 0 6 9" fill="none" stroke="#9a9a9a" stroke-width="1.1"><path d="M5 .5l-4 4 4 4"/></svg>
<svg style="left:47px;top:492px" width="6" height="9" viewBox="0 0 6 9" fill="none" stroke="#9a9a9a" stroke-width="1.1"><path d="M1 .5l4 4-4 4"/></svg>
<div class="a" style="left:94.2px;top:482px;width:50.1px;height:25px;background:#ffffff;border-radius:0 0 4px 4px"></div>
<div class="a" style="left:101.5px;top:502.4px;width:35.5px;height:1.7px;background:#1f6e43"></div>
<div class="a" style="left:147px;top:488px;width:1px;height:16px;background:#5a5a5a"></div>
<svg style="left:183px;top:491px" width="10" height="10" viewBox="0 0 10 10" fill="none" stroke="#a8a8a8" stroke-width="0.9"><path d="M5 0v10M0 5h10"/></svg>
<div class="a" style="left:434.5px;top:492px;width:2px;height:2px;background:#d0d0d0"></div>
<div class="a" style="left:434.5px;top:496px;width:2px;height:2px;background:#d0d0d0"></div>
<div class="a" style="left:434.5px;top:500px;width:2px;height:2px;background:#d0d0d0"></div>
<svg style="left:453.3px;top:491.7px" width="6.5" height="8.5" viewBox="0 0 6.5 8.5"><path d="M0 4.25L6.5 0v8.5z" fill="#b4b4b4"/></svg>
<div class="a" style="left:464.5px;top:492px;width:201px;height:7.5px;background:#a6a6a6;border-radius:4px"></div>
<svg style="left:695.3px;top:491.7px" width="6.5" height="8.5" viewBox="0 0 6.5 8.5"><path d="M6.5 4.25L0 0v8.5z" fill="#b4b4b4"/></svg>
<svg style="left:39.5px;top:514px" width="13" height="12" viewBox="0 0 13 12" fill="none" stroke="#d8d8d8" stroke-width="1.1">
<path d="M.6 12V.6h11.8v5"/><path d="M.6 3.2h11.8" stroke-width="1.6"/><path d="M3 6.5v5"/><circle cx="8.3" cy="8" r="3.4" fill="#141414"/><circle cx="8.3" cy="8" r="1.3" fill="#d8d8d8" stroke="none"/></svg>
<svg style="left:65.5px;top:513px" width="14" height="13" viewBox="0 0 14 13" fill="none" stroke="#d8d8d8" stroke-width="1.05" stroke-linejoin="round">
<circle cx="6.6" cy="2.3" r="1.5"/><path d="M.8 2.2c.3 1.8 1.6 2.8 3.2 3.2v2.4L2.6 12.2M12.3 2.2c-.3 1.8-1.6 2.8-3.2 3.2v1.2"/><path d="M4 7.8l1.6 1"/><path d="M7.6 10.2l1.6 1.8 3.8-4.4"/></svg>
<svg style="left:468.5px;top:513.5px" width="12" height="11" viewBox="0 0 12 11" fill="none" stroke="#8a8a8a" stroke-width="1">
<rect x=".5" y=".5" width="11" height="10"/><path d="M4 .5v10M8 .5v10M.5 4h11M.5 7.5h11"/></svg>
<svg style="left:503px;top:513.5px" width="12" height="11" viewBox="0 0 12 11" fill="none" stroke="#8a8a8a" stroke-width="1">
<rect x=".5" y=".5" width="11" height="10"/><rect x="3" y="2.5" width="6" height="6"/><path d="M4.5 4.5h3M4.5 6.5h3"/></svg>
<svg style="left:537px;top:513.5px" width="12" height="11" viewBox="0 0 12 11" fill="none" stroke="#8a8a8a" stroke-width="1">
<path d="M.5 10.5V.5h11v10zM6.5 .5v7.5H.5"/></svg>
<div class="a" style="left:565px;top:519.5px;width:6.5px;height:1px;background:#6a6a6a"></div>
<div class="a" style="left:576.5px;top:519.5px;width:84.5px;height:1px;background:#9a9a9a"></div>
<div class="a" style="left:618.5px;top:517px;width:1px;height:5px;background:#b0b0b0"></div>
<svg style="left:665.5px;top:516.5px" width="7" height="7" viewBox="0 0 7 7" fill="none" stroke="#6a6a6a" stroke-width="1"><path d="M3.5 0v7M0 3.5h7"/></svg>
<div class="a" style="left:101.50px;top:249.17px;width:258.00px;height:21.17px;background:#ed7d31;"></div>
<div class="a" style="left:101.50px;top:248.67px;width:258.00px;height:1.00px;background:#7a4520;"></div>
<div class="a" style="left:184.20px;top:249.17px;width:1.00px;height:21.17px;background:#b85a22;"></div>
<div class="a" style="left:285.60px;top:249.17px;width:1.00px;height:21.17px;background:#b85a22;"></div>
<div class="a" style="left:101.50px;top:270.33px;width:184.60px;height:84.67px;background:#c6e0b4;"></div>
<div class="a" style="left:184.70px;top:270.33px;width:101.40px;height:21.17px;background:#bfd8c1;"></div>
<div class="a" style="left:286.10px;top:270.33px;width:146.80px;height:21.17px;background:#c6e0b4;"></div>
<div class="a" style="left:286.10px;top:291.50px;width:73.40px;height:63.50px;background:#93a88b;"></div>
<div class="a" style="left:101.50px;top:269.83px;width:184.60px;height:1.00px;background:#5b5a3a;"></div>
<div class="a" style="left:101.50px;top:291.00px;width:258.00px;height:1.00px;background:#34402f;"></div>
<div class="a" style="left:101.50px;top:312.17px;width:258.00px;height:1.00px;background:#34402f;"></div>
<div class="a" style="left:101.50px;top:333.33px;width:258.00px;height:1.00px;background:#34402f;"></div>
<div class="a" style="left:101.50px;top:354.50px;width:258.00px;height:1.00px;background:#34402f;"></div>
<div class="a" style="left:286.10px;top:269.83px;width:73.40px;height:1.00px;background:#5b5a3a;"></div>
<div class="a" style="left:150.20px;top:270.33px;width:1.00px;height:84.67px;background:#34402f;"></div>
<div class="a" style="left:184.20px;top:270.33px;width:1.00px;height:84.67px;background:#34402f;"></div>
<div class="a" style="left:101.00px;top:248.67px;width:1.00px;height:106.33px;background:#34402f;"></div>
<div class="a" style="left:285.60px;top:291.50px;width:1.20px;height:63.50px;background:#3f7a4f;"></div>
<div class="a" style="left:358.50px;top:291.50px;width:1.20px;height:63.50px;background:#3f7a4f;"></div>
<div class="a" style="left:286.10px;top:354.30px;width:73.40px;height:1.20px;background:#3f7a4f;"></div>
<div class="a" style="left:357.00px;top:352.80px;width:4.00px;height:4.00px;background:#2f6b40;"></div>
<div class="a" style="left:184.20px;top:269.83px;width:102.40px;height:22.17px;border:1px solid #7aa7d9"></div>
<div class="a" style="left:182.70px;top:268.33px;width:4.00px;height:4.00px;background:#8fb7e6;"></div>
<div class="a" style="left:284.10px;top:268.33px;width:4.00px;height:4.00px;background:#8fb7e6;"></div>
<div class="a" style="left:182.70px;top:289.50px;width:4.00px;height:4.00px;background:#8fb7e6;"></div>
<div class="a" style="left:284.10px;top:289.50px;width:4.00px;height:4.00px;background:#8fb7e6;"></div>
<svg style="left:185.50px;top:271.13px" width="5" height="5" viewBox="0 0 5 5"><path d="M0 0h4.6L0 4.6z" fill="#1f7a3a"/></svg>
<svg style="left:185.50px;top:292.30px" width="5" height="5" viewBox="0 0 5 5"><path d="M0 0h4.6L0 4.6z" fill="#1f7a3a"/></svg>
<svg style="left:185.50px;top:313.47px" width="5" height="5" viewBox="0 0 5 5"><path d="M0 0h4.6L0 4.6z" fill="#1f7a3a"/></svg>
<div class="t" style="left:464.00px;top:13.02px;font-size:10.50px;color:#e8e8e8;font-weight:normal;font-family:'Liberation Sans',sans-serif;transform:scaleX(0.917);-webkit-text-stroke:0.3px #e8e8e8;">Book1</div>
<div class="t" style="left:498.60px;top:13.02px;font-size:10.50px;color:#e8e8e8;font-weight:normal;font-family:'Liberation Sans',sans-serif;transform:scaleX(0.914);-webkit-text-stroke:0.3px #e8e8e8;">-</div>
<div class="t" style="left:508.40px;top:13.02px;font-size:10.50px;color:#e8e8e8;font-weight:normal;font-family:'Liberation Sans',sans-serif;transform:scaleX(0.818);-webkit-text-stroke:0.3px #e8e8e8;">Excel</div>
<div class="t" style="left:18.00px;top:45.74px;font-size:12.00px;color:#f2f2f2;font-weight:normal;font-family:'Liberation Sans',sans-serif;transform:scaleX(0.879);-webkit-text-stroke:0.3px #f2f2f2;">File</div>
<div class="t" style="left:58.00px;top:45.74px;font-size:12.00px;color:#f2f2f2;font-weight:normal;font-family:'Liberation Sans',sans-serif;transform:scaleX(0.900);-webkit-text-stroke:0.3px #f2f2f2;">Insert</div>
<div class="t" style="left:103.00px;top:45.74px;font-size:12.00px;color:#f2f2f2;font-weight:normal;font-family:'Liberation Sans',sans-serif;transform:scaleX(0.937);-webkit-text-stroke:0.3px #f2f2f2;">Home</div>
<div class="t" style="left:150.00px;top:45.74px;font-size:12.00px;color:#f2f2f2;font-weight:normal;font-family:'Liberation Sans',sans-serif;transform:scaleX(0.928);-webkit-text-stroke:0.3px #f2f2f2;">Draw</div>
<div class="t" style="left:193.00px;top:45.74px;font-size:12.00px;color:#f2f2f2;font-weight:normal;font-family:'Liberation Sans',sans-serif;transform:scaleX(0.890);-webkit-text-stroke:0.3px #f2f2f2;">Page Layout</div>
<div class="t" style="left:334.00px;top:45.74px;font-size:12.00px;color:#f2f2f2;font-weight:normal;font-family:'Liberation Sans',sans-serif;transform:scaleX(0.868);-webkit-text-stroke:0.3px #f2f2f2;">Data</div>
<div class="t" style="left:373.00px;top:45.74px;font-size:12.00px;color:#f2f2f2;font-weight:normal;font-family:'Liberation Sans',sans-serif;transform:scaleX(0.877);-webkit-text-stroke:0.3px #f2f2f2;">Review</div>
<div class="t" style="left:424.50px;top:45.74px;font-size:12.00px;color:#f2f2f2;font-weight:normal;font-family:'Liberation Sans',sans-serif;transform:scaleX(0.911);-webkit-text-stroke:0.3px #f2f2f2;">View</div>
<div class="t" style="left:465.50px;top:45.74px;font-size:12.00px;color:#f2f2f2;font-weight:normal;font-family:'Liberation Sans',sans-serif;transform:scaleX(0.923);-webkit-text-stroke:0.3px #f2f2f2;">Developer</div>
<div class="t" style="left:533.00px;top:45.74px;font-size:12.00px;color:#f2f2f2;font-weight:normal;font-family:'Liberation Sans',sans-serif;transform:scaleX(0.932);-webkit-text-stroke:0.3px #f2f2f2;">Help</div>
<div class="t" style="left:271.00px;top:45.74px;font-size:12.00px;color:#ffffff;font-weight:normal;font-family:'Liberation Sans',sans-serif;transform:scaleX(0.930);-webkit-text-stroke:0.55px #fff;">Formulas</div>
<div class="t" style="left:670.00px;top:45.24px;font-size:12.00px;color:#16301d;font-weight:normal;font-family:'Liberation Sans',sans-serif;transform:scaleX(0.859);-webkit-text-stroke:0.3px #16301d;">Share</div>
<div class="t" style="left:25.00px;top:101.90px;font-size:10.25px;color:#f0f0f0;font-weight:normal;font-family:'Liberation Sans',sans-serif;transform:scaleX(0.995);-webkit-text-stroke:0.3px #f0f0f0;">Insert</div>
<div class="t" style="left:18.50px;top:115.50px;font-size:10.25px;color:#f0f0f0;font-weight:normal;font-family:'Liberation Sans',sans-serif;transform:scaleX(0.992);-webkit-text-stroke:0.3px #f0f0f0;">Function</div>
<div class="t" style="left:82.00px;top:73.02px;font-size:10.50px;color:#f0f0f0;font-weight:normal;font-family:'Liberation Sans',sans-serif;transform:scaleX(0.972);-webkit-text-stroke:0.3px #f0f0f0;">AutoSum</div>
<div class="t" style="left:82.20px;top:94.82px;font-size:10.50px;color:#f0f0f0;font-weight:normal;font-family:'Liberation Sans',sans-serif;transform:scaleX(0.908);-webkit-text-stroke:0.3px #f0f0f0;">Recently Used</div>
<div class="t" style="left:82.20px;top:117.42px;font-size:10.50px;color:#f0f0f0;font-weight:normal;font-family:'Liberation Sans',sans-serif;transform:scaleX(0.904);-webkit-text-stroke:0.3px #f0f0f0;">Financial</div>
<div class="t" style="left:184.40px;top:73.02px;font-size:10.50px;color:#f0f0f0;font-weight:normal;font-family:'Liberation Sans',sans-serif;transform:scaleX(0.946);-webkit-text-stroke:0.3px #f0f0f0;">Logical</div>
<div class="t" style="left:184.40px;top:94.82px;font-size:10.50px;color:#f0f0f0;font-weight:normal;font-family:'Liberation Sans',sans-serif;transform:scaleX(0.908);-webkit-text-stroke:0.3px #f0f0f0;">Text</div>
<div class="t" style="left:184.40px;top:117.42px;font-size:10.50px;color:#f0f0f0;font-weight:normal;font-family:'Liberation Sans',sans-serif;transform:scaleX(0.978);-webkit-text-stroke:0.3px #f0f0f0;">Date &amp; Time</div>
<div class="t" style="left:122.70px;top:136.28px;font-size:10.00px;color:#e8e8e8;font-weight:normal;font-family:'Liberation Sans',sans-serif;transform:scaleX(0.893);-webkit-text-stroke:0.3px #e8e8e8;">Function Library</div>
<div class="t" style="left:311.00px;top:99.22px;font-size:10.50px;color:#f0f0f0;font-weight:normal;font-family:'Liberation Sans',sans-serif;transform:scaleX(0.953);-webkit-text-stroke:0.3px #f0f0f0;">Defined</div>
<div class="t" style="left:308.50px;top:113.02px;font-size:10.50px;color:#f0f0f0;font-weight:normal;font-family:'Liberation Sans',sans-serif;transform:scaleX(0.917);-webkit-text-stroke:0.3px #f0f0f0;">Names</div>
<div class="t" style="left:369.30px;top:99.22px;font-size:10.50px;color:#f0f0f0;font-weight:normal;font-family:'Liberation Sans',sans-serif;transform:scaleX(0.961);-webkit-text-stroke:0.3px #f0f0f0;">Formula</div>
<div class="t" style="left:364.00px;top:113.02px;font-size:10.50px;color:#f0f0f0;font-weight:normal;font-family:'Liberation Sans',sans-serif;transform:scaleX(1.001);-webkit-text-stroke:0.3px #f0f0f0;">Auditing</div>
<div class="t" style="left:428.50px;top:101.42px;font-size:10.50px;color:#7a7a7a;font-weight:normal;font-family:'Liberation Sans',sans-serif;transform:scaleX(0.953);-webkit-text-stroke:0.3px #7a7a7a;">Calculation</div>
<div class="t" style="left:431.00px;top:115.22px;font-size:10.50px;color:#7a7a7a;font-weight:normal;font-family:'Liberation Sans',sans-serif;transform:scaleX(0.981);-webkit-text-stroke:0.3px #7a7a7a;">Options</div>
<div class="t" style="left:442.20px;top:136.28px;font-size:10.00px;color:#e8e8e8;font-weight:normal;font-family:'Liberation Sans',sans-serif;transform:scaleX(0.889);-webkit-text-stroke:0.3px #e8e8e8;">Calculation</div>
<div class="t" style="left:537.30px;top:73.02px;font-size:10.50px;color:#f0f0f0;font-weight:normal;font-family:'Liberation Sans',sans-serif;transform:scaleX(0.944);-webkit-text-stroke:0.3px #f0f0f0;">Euro Conversion</div>
<div class="t" style="left:537.30px;top:95.22px;font-size:10.50px;color:#f0f0f0;font-weight:normal;font-family:'Liberation Sans',sans-serif;transform:scaleX(0.966);-webkit-text-stroke:0.3px #f0f0f0;">Euro Formatting</div>
<div class="t" style="left:542.00px;top:117.42px;font-size:10.50px;color:#f0f0f0;font-weight:normal;font-family:'Liberation Sans',sans-serif;transform:scaleX(1.014);-webkit-text-stroke:0.3px #f0f0f0;">Off</div>
<div class="t" style="left:549.00px;top:136.28px;font-size:10.00px;color:#e8e8e8;font-weight:normal;font-family:'Liberation Sans',sans-serif;transform:scaleX(0.875);-webkit-text-stroke:0.3px #e8e8e8;">Solutions</div>
<div class="t" style="left:11.30px;top:161.11px;font-size:14.00px;color:#f2f2f2;font-weight:normal;font-family:'Liberation Sans',sans-serif;transform:scaleX(0.821);-webkit-text-stroke:0.3px #f2f2f2;">EXP</div>
<div class="t" style="left:188.00px;top:162.20px;font-size:14.50px;color:#f4f4f4;font-weight:normal;font-family:'Liberation Sans',sans-serif;transform:scaleX(0.878);-webkit-text-stroke:0.25px #f4f4f4;">=ERROR.TYPE(D3)</div>
<div class="t" style="left:101.50px;top:488.55px;font-size:12.50px;color:#1f1f1f;font-weight:normal;font-family:'Liberation Sans',sans-serif;transform:scaleX(0.878);-webkit-text-stroke:0.35px #1f1f1f;">Sheet1</div>
<div class="t" style="left:9.50px;top:516.00px;font-size:10.25px;color:#e0e0e0;font-weight:normal;font-family:'Liberation Sans',sans-serif;transform:scaleX(0.792);-webkit-text-stroke:0.1px #e0e0e0;">Edit</div>
<div class="t" style="left:82.00px;top:516.00px;font-size:10.25px;color:#e0e0e0;font-weight:normal;font-family:'Liberation Sans',sans-serif;transform:scaleX(0.819);letter-spacing:0.2px;-webkit-text-stroke:0.1px #e0e0e0;">Accessibility: Good to go</div>
<div class="t" style="left:683.00px;top:516.00px;font-size:10.25px;color:#6a6a6a;font-weight:normal;font-family:'Liberation Sans',sans-serif;transform:scaleX(0.858);-webkit-text-stroke:0.3px #6a6a6a;">100%</div>
<div class="t" style="left:129.00px;top:254.20px;font-size:13.00px;color:#1a1208;font-weight:bold;font-family:'Liberation Sans',sans-serif;transform:scaleX(1.064);-webkit-text-stroke:0.1px #1a1208;">Data</div>
<div class="t" style="left:188.50px;top:253.80px;font-size:13.25px;color:#22120a;font-weight:normal;font-family:'Liberation Sans',sans-serif;transform:scaleX(1.093);-webkit-text-stroke:0.3px #22120a;">Error</div>
<div class="t" style="left:289.70px;top:254.00px;font-size:13.25px;color:#22120a;font-weight:normal;font-family:'Liberation Sans',sans-serif;transform:scaleX(1.103);-webkit-text-stroke:0.3px #22120a;">Error Type</div>
<div class="t" style="left:132.00px;top:275.00px;font-size:14.50px;color:#0f0f0f;font-weight:normal;font-family:'Liberation Sans',sans-serif;transform:scaleX(0.948);-webkit-text-stroke:0.3px #0f0f0f;">80</div>
<div class="t" style="left:174.50px;top:275.00px;font-size:14.50px;color:#0f0f0f;font-weight:normal;font-family:'Liberation Sans',sans-serif;transform:scaleX(0.928);-webkit-text-stroke:0.3px #0f0f0f;">0</div>
<div class="t" style="left:210.00px;top:275.00px;font-size:14.50px;color:#0f0f0f;font-weight:normal;font-family:'Liberation Sans',sans-serif;transform:scaleX(1.046);-webkit-text-stroke:0.3px #0f0f0f;">#DIV/0!</div>
<div class="t" style="left:289.50px;top:275.90px;font-size:14.25px;color:#0f0f0f;font-weight:normal;font-family:'Liberation Sans',sans-serif;transform:scaleX(0.851);-webkit-text-stroke:0.3px #0f0f0f;">=ERROR.TYPE(</div>
<div class="t" style="left:380.00px;top:275.90px;font-size:14.25px;color:#5a9ad6;font-weight:normal;font-family:'Liberation Sans',sans-serif;transform:scaleX(1.004);-webkit-text-stroke:0.3px #5a9ad6;">D3</div>
<div class="t" style="left:398.80px;top:275.90px;font-size:14.25px;color:#0f0f0f;font-weight:normal;font-family:'Liberation Sans',sans-serif;transform:scaleX(0.947);-webkit-text-stroke:0.3px #0f0f0f;">)</div>
<div class="t" style="left:132.00px;top:296.00px;font-size:14.50px;color:#0f0f0f;font-weight:normal;font-family:'Liberation Sans',sans-serif;transform:scaleX(0.948);-webkit-text-stroke:0.3px #0f0f0f;">80</div>
<div class="t" style="left:174.20px;top:296.00px;font-size:14.50px;color:#0f0f0f;font-weight:normal;font-family:'Liberation Sans',sans-serif;transform:scaleX(0.928);-webkit-text-stroke:0.3px #0f0f0f;">3</div>
<div class="t" style="left:208.00px;top:296.00px;font-size:14.50px;color:#0f0f0f;font-weight:normal;font-family:'Liberation Sans',sans-serif;transform:scaleX(0.896);-webkit-text-stroke:0.3px #0f0f0f;">#NAME?</div>
<div class="t" style="left:132.00px;top:317.00px;font-size:14.50px;color:#0f0f0f;font-weight:normal;font-family:'Liberation Sans',sans-serif;transform:scaleX(0.948);-webkit-text-stroke:0.3px #0f0f0f;">80</div>
<div class="t" style="left:174.20px;top:317.00px;font-size:14.50px;color:#0f0f0f;font-weight:normal;font-family:'Liberation Sans',sans-serif;transform:scaleX(0.928);-webkit-text-stroke:0.3px #0f0f0f;">3</div>
<div class="t" style="left:217.80px;top:317.00px;font-size:14.50px;color:#0f0f0f;font-weight:normal;font-family:'Liberation Sans',sans-serif;transform:scaleX(0.803);-webkit-text-stroke:0.3px #0f0f0f;">#REF!</div>
<div class="t" style="left:111.70px;top:338.00px;font-size:14.50px;color:#0f0f0f;font-weight:normal;font-family:'Liberation Sans',sans-serif;transform:scaleX(0.973);-webkit-text-stroke:0.3px #0f0f0f;">0.458</div>
<div class="t" style="left:162.80px;top:338.00px;font-size:14.50px;color:#0f0f0f;font-weight:normal;font-family:'Liberation Sans',sans-serif;transform:scaleX(0.942);-webkit-text-stroke:0.3px #0f0f0f;">0.5</div>
<div class="t" style="left:203.30px;top:338.00px;font-size:14.50px;color:#0f0f0f;font-weight:normal;font-family:'Liberation Sans',sans-serif;transform:scaleX(0.979);-webkit-text-stroke:0.3px #0f0f0f;">-0.08332667</div>
</body></html>
